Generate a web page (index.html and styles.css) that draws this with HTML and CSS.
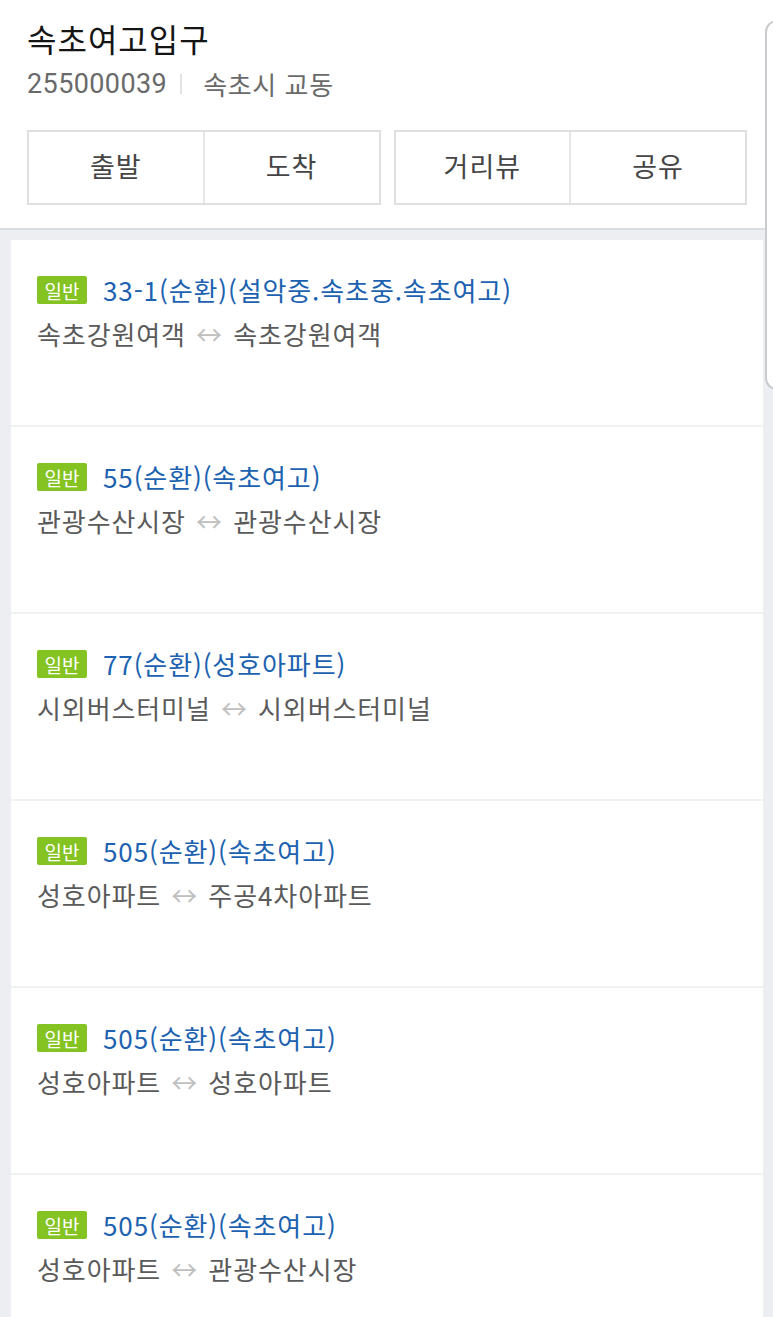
FILE: index.html
```html
<!DOCTYPE html>
<html lang="ko">
<head>
<meta charset="utf-8">
<link rel="stylesheet" href="styles.css">
</head>
<body>
<div class="page">
  <header class="head">
    <h1 class="title">속초여고입구</h1>
    <div class="sub"><span class="num">255000039</span><span class="bar"></span><span>속초시 교동</span></div>
    <div class="actions">
      <div class="group"><div class="btn">출발</div><div class="btn">도착</div></div>
      <div class="group"><div class="btn">거리뷰</div><div class="btn">공유</div></div>
    </div>
  </header>
  <div class="list">
    <div class="card">
      <div class="item"><div class="line1"><span class="badge">일반</span><span class="route">33-1(순환)(설악중.속초중.속초여고)</span></div><div class="line2">속초강원여객 <span class="arrow">↔</span> 속초강원여객</div></div>
      <div class="item"><div class="line1"><span class="badge">일반</span><span class="route">55(순환)(속초여고)</span></div><div class="line2">관광수산시장 <span class="arrow">↔</span> 관광수산시장</div></div>
      <div class="item"><div class="line1"><span class="badge">일반</span><span class="route">77(순환)(성호아파트)</span></div><div class="line2">시외버스터미널 <span class="arrow">↔</span> 시외버스터미널</div></div>
      <div class="item"><div class="line1"><span class="badge">일반</span><span class="route">505(순환)(속초여고)</span></div><div class="line2">성호아파트 <span class="arrow">↔</span> 주공4차아파트</div></div>
      <div class="item"><div class="line1"><span class="badge">일반</span><span class="route">505(순환)(속초여고)</span></div><div class="line2">성호아파트 <span class="arrow">↔</span> 성호아파트</div></div>
      <div class="item"><div class="line1"><span class="badge">일반</span><span class="route">505(순환)(속초여고)</span></div><div class="line2">성호아파트 <span class="arrow">↔</span> 관광수산시장</div></div>
    </div>
  </div>
  <div class="edge"></div>
</div>
</body>
</html>
```
FILE: styles.css
```css
* { box-sizing: border-box; }
html, body { margin: 0; padding: 0; }
body {
  width: 773px;
  height: 1317px;
  overflow: hidden;
  background: #eceef1;
  font-family: "Noto Sans CJK KR", "Noto Sans", Roboto, sans-serif;
}
.page { position: relative; width: 773px; height: 1317px; }
.head {
  background: #fff;
  padding: 17px 26px 0 27px;
  height: 230px;
  border-bottom: 2px solid #d9dce1;
}
.title {
  margin: 0;
  font-size: 32px;
  font-weight: 400;
  letter-spacing: 1px;
  line-height: 42px;
  color: #151515;
}
.sub {
  display: flex;
  align-items: center;
  margin-top: 8px;
  font-size: 26px;
  letter-spacing: 0.6px;
  line-height: 34px;
  color: #6a6a6a;
}
.num { font-family: Roboto, "Noto Sans", sans-serif; font-size: 27px; letter-spacing: 0.4px; }
.bar {
  width: 2px;
  height: 20px;
  background: #e2e2e2;
  margin: 0 21px 0 13px;
}
.actions {
  display: flex;
  gap: 13px;
  margin-top: 29px;
  width: 720px;
}
.group {
  flex: 1;
  display: flex;
  height: 75px;
  border: 2px solid #dfdfdf;
}
.btn {
  flex: 1;
  display: flex;
  align-items: center;
  justify-content: center;
  font-size: 27px;
  letter-spacing: 1px;
  color: #454545;
  padding-bottom: 4px;
}
.btn + .btn { border-left: 2px solid #e6e6e6; }
.list { padding: 10px 10px 0 11px; }
.card { background: #fff; }
.item {
  height: 187px;
  padding: 32px 26px 0 26px;
  border-bottom: 2px solid #f0f1f2;
}
.line1 { display: flex; align-items: center; height: 36px; }
.badge {
  display: inline-flex;
  align-items: center;
  justify-content: center;
  width: 50px;
  height: 28px;
  background: #84c322;
  color: #fff;
  font-size: 19px;
  border-radius: 2px;
  margin-right: 16px;
}
.route {
  font-size: 26px;
  letter-spacing: 0.9px;
  color: #1c62b0;
  line-height: 36px;
}
.line2 {
  margin-top: 8px;
  font-size: 26px;
  letter-spacing: 0.9px;
  line-height: 36px;
  color: #5a5a5a;
}
.arrow { color: #c0c0c0; margin: 0 2px; }
.edge {
  position: absolute;
  left: 765px;
  top: 20px;
  width: 30px;
  height: 370px;
  background: #fff;
  border: 2px solid #c9cbcf;
  border-radius: 12px;
}
```
